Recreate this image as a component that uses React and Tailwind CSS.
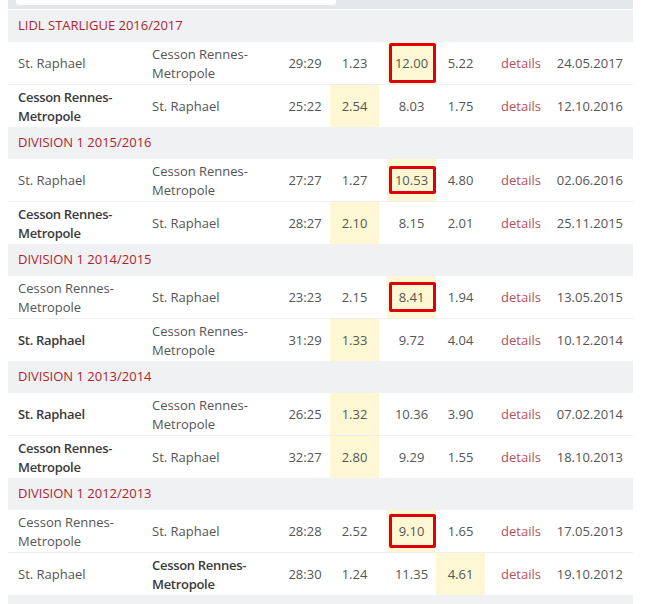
import React from "react";

const sections = [
  {
    title: "LIDL STARLIGUE 2016/2017",
    rows: [
      { home: "St. Raphael", away: "Cesson Rennes-Metropole", score: "29:29", odds: ["1.23", "12.00", "5.22"], hl: 1, box: 40, date: "24.05.2017" },
      { home: "Cesson Rennes-Metropole", away: "St. Raphael", score: "25:22", odds: ["2.54", "8.03", "1.75"], hl: 0, bold: "home", date: "12.10.2016" },
    ],
  },
  {
    title: "DIVISION 1 2015/2016",
    rows: [
      { home: "St. Raphael", away: "Cesson Rennes-Metropole", score: "27:27", odds: ["1.27", "10.53", "4.80"], hl: 1, box: 28, date: "02.06.2016" },
      { home: "Cesson Rennes-Metropole", away: "St. Raphael", score: "28:27", odds: ["2.10", "8.15", "2.01"], hl: 0, bold: "home", date: "25.11.2015" },
    ],
  },
  {
    title: "DIVISION 1 2014/2015",
    rows: [
      { home: "Cesson Rennes-Metropole", away: "St. Raphael", score: "23:23", odds: ["2.15", "8.41", "1.94"], hl: 1, box: 30, date: "13.05.2015" },
      { home: "St. Raphael", away: "Cesson Rennes-Metropole", score: "31:29", odds: ["1.33", "9.72", "4.04"], hl: 0, bold: "home", date: "10.12.2014" },
    ],
  },
  {
    title: "DIVISION 1 2013/2014",
    rows: [
      { home: "St. Raphael", away: "Cesson Rennes-Metropole", score: "26:25", odds: ["1.32", "10.36", "3.90"], hl: 0, bold: "home", date: "07.02.2014" },
      { home: "Cesson Rennes-Metropole", away: "St. Raphael", score: "32:27", odds: ["2.80", "9.29", "1.55"], hl: 0, bold: "home", date: "18.10.2013" },
    ],
  },
  {
    title: "DIVISION 1 2012/2013",
    rows: [
      { home: "Cesson Rennes-Metropole", away: "St. Raphael", score: "28:28", odds: ["2.52", "9.10", "1.65"], hl: 1, box: 34, date: "17.05.2013" },
      { home: "St. Raphael", away: "Cesson Rennes-Metropole", score: "28:30", odds: ["1.24", "11.35", "4.61"], hl: 2, bold: "away", date: "19.10.2012" },
    ],
  },
];

const Team = ({ name, bold, className }) => (
  <div className={`${className} flex items-center leading-[19px] pt-px ${bold ? "font-semibold text-[#3a3a3a] tracking-[-0.3px]" : "text-[#555]"}`}>
    <span className="block max-w-[120px]">{name}</span>
  </div>
);

const Odd = ({ value, highlight, box, className }) => (
  <div className={`relative flex items-center justify-center ${className} ${highlight ? "bg-[#fdf8d3]" : ""}`}>
    {box && (
      <div
        className="absolute left-[2px] right-0 top-1/2 -translate-y-1/2 border-[3px] border-[#e0000a] rounded-[2px]"
        style={{ height: box }}
      />
    )}
    <span className="relative">{value}</span>
  </div>
);

const Row = ({ row }) => (
  <div className="flex h-[42px] bg-white text-[13px] text-[#555]">
    <Team name={row.home} bold={row.bold === "home"} className="w-[136px] pl-[10px]" />
    <Team name={row.away} bold={row.bold === "away"} className="w-[136px] pl-[8px]" />
    <div className="w-[50px] flex items-center justify-center pt-px">{row.score}</div>
    <Odd value={row.odds[0]} highlight={row.hl === 0} className="w-[49px] pt-px" />
    <div className="w-[8px]" />
    <Odd value={row.odds[1]} highlight={row.hl === 1} box={row.hl === 1 && row.box} className="w-[49px] pt-px" />
    <Odd value={row.odds[2]} highlight={row.hl === 2} className="w-[49px] pt-px" />
    <div className="w-[72px] flex items-center justify-center pt-px text-[#b5505a]">details</div>
    <div className="w-[76px] flex items-center justify-end pt-px pr-[10px]">{row.date}</div>
  </div>
);

export default function App() {
  return (
    <div className="w-[645px] h-[604px] bg-white overflow-hidden" style={{ fontFamily: "'Open Sans', sans-serif" }}>
      <div className="ml-[8px] w-[625px] bg-[#f0f1f3]">
        <div className="h-[10px] bg-[#e3e6ea] px-[8px] border-b border-white">
          <div className="w-[320px] h-[5px] bg-white rounded-b-[3px]" />
        </div>
        {sections.map((s) => (
          <div key={s.title}>
            <div className="h-[32px] flex items-center pl-[10px] text-[13px] text-[#b01e2e] uppercase">{s.title}</div>
            <Row row={s.rows[0]} />
            <div className="h-px bg-[#eeeeee]" />
            <Row row={s.rows[1]} />
          </div>
        ))}
        <div className="h-[10px]" />
      </div>
    </div>
  );
}
